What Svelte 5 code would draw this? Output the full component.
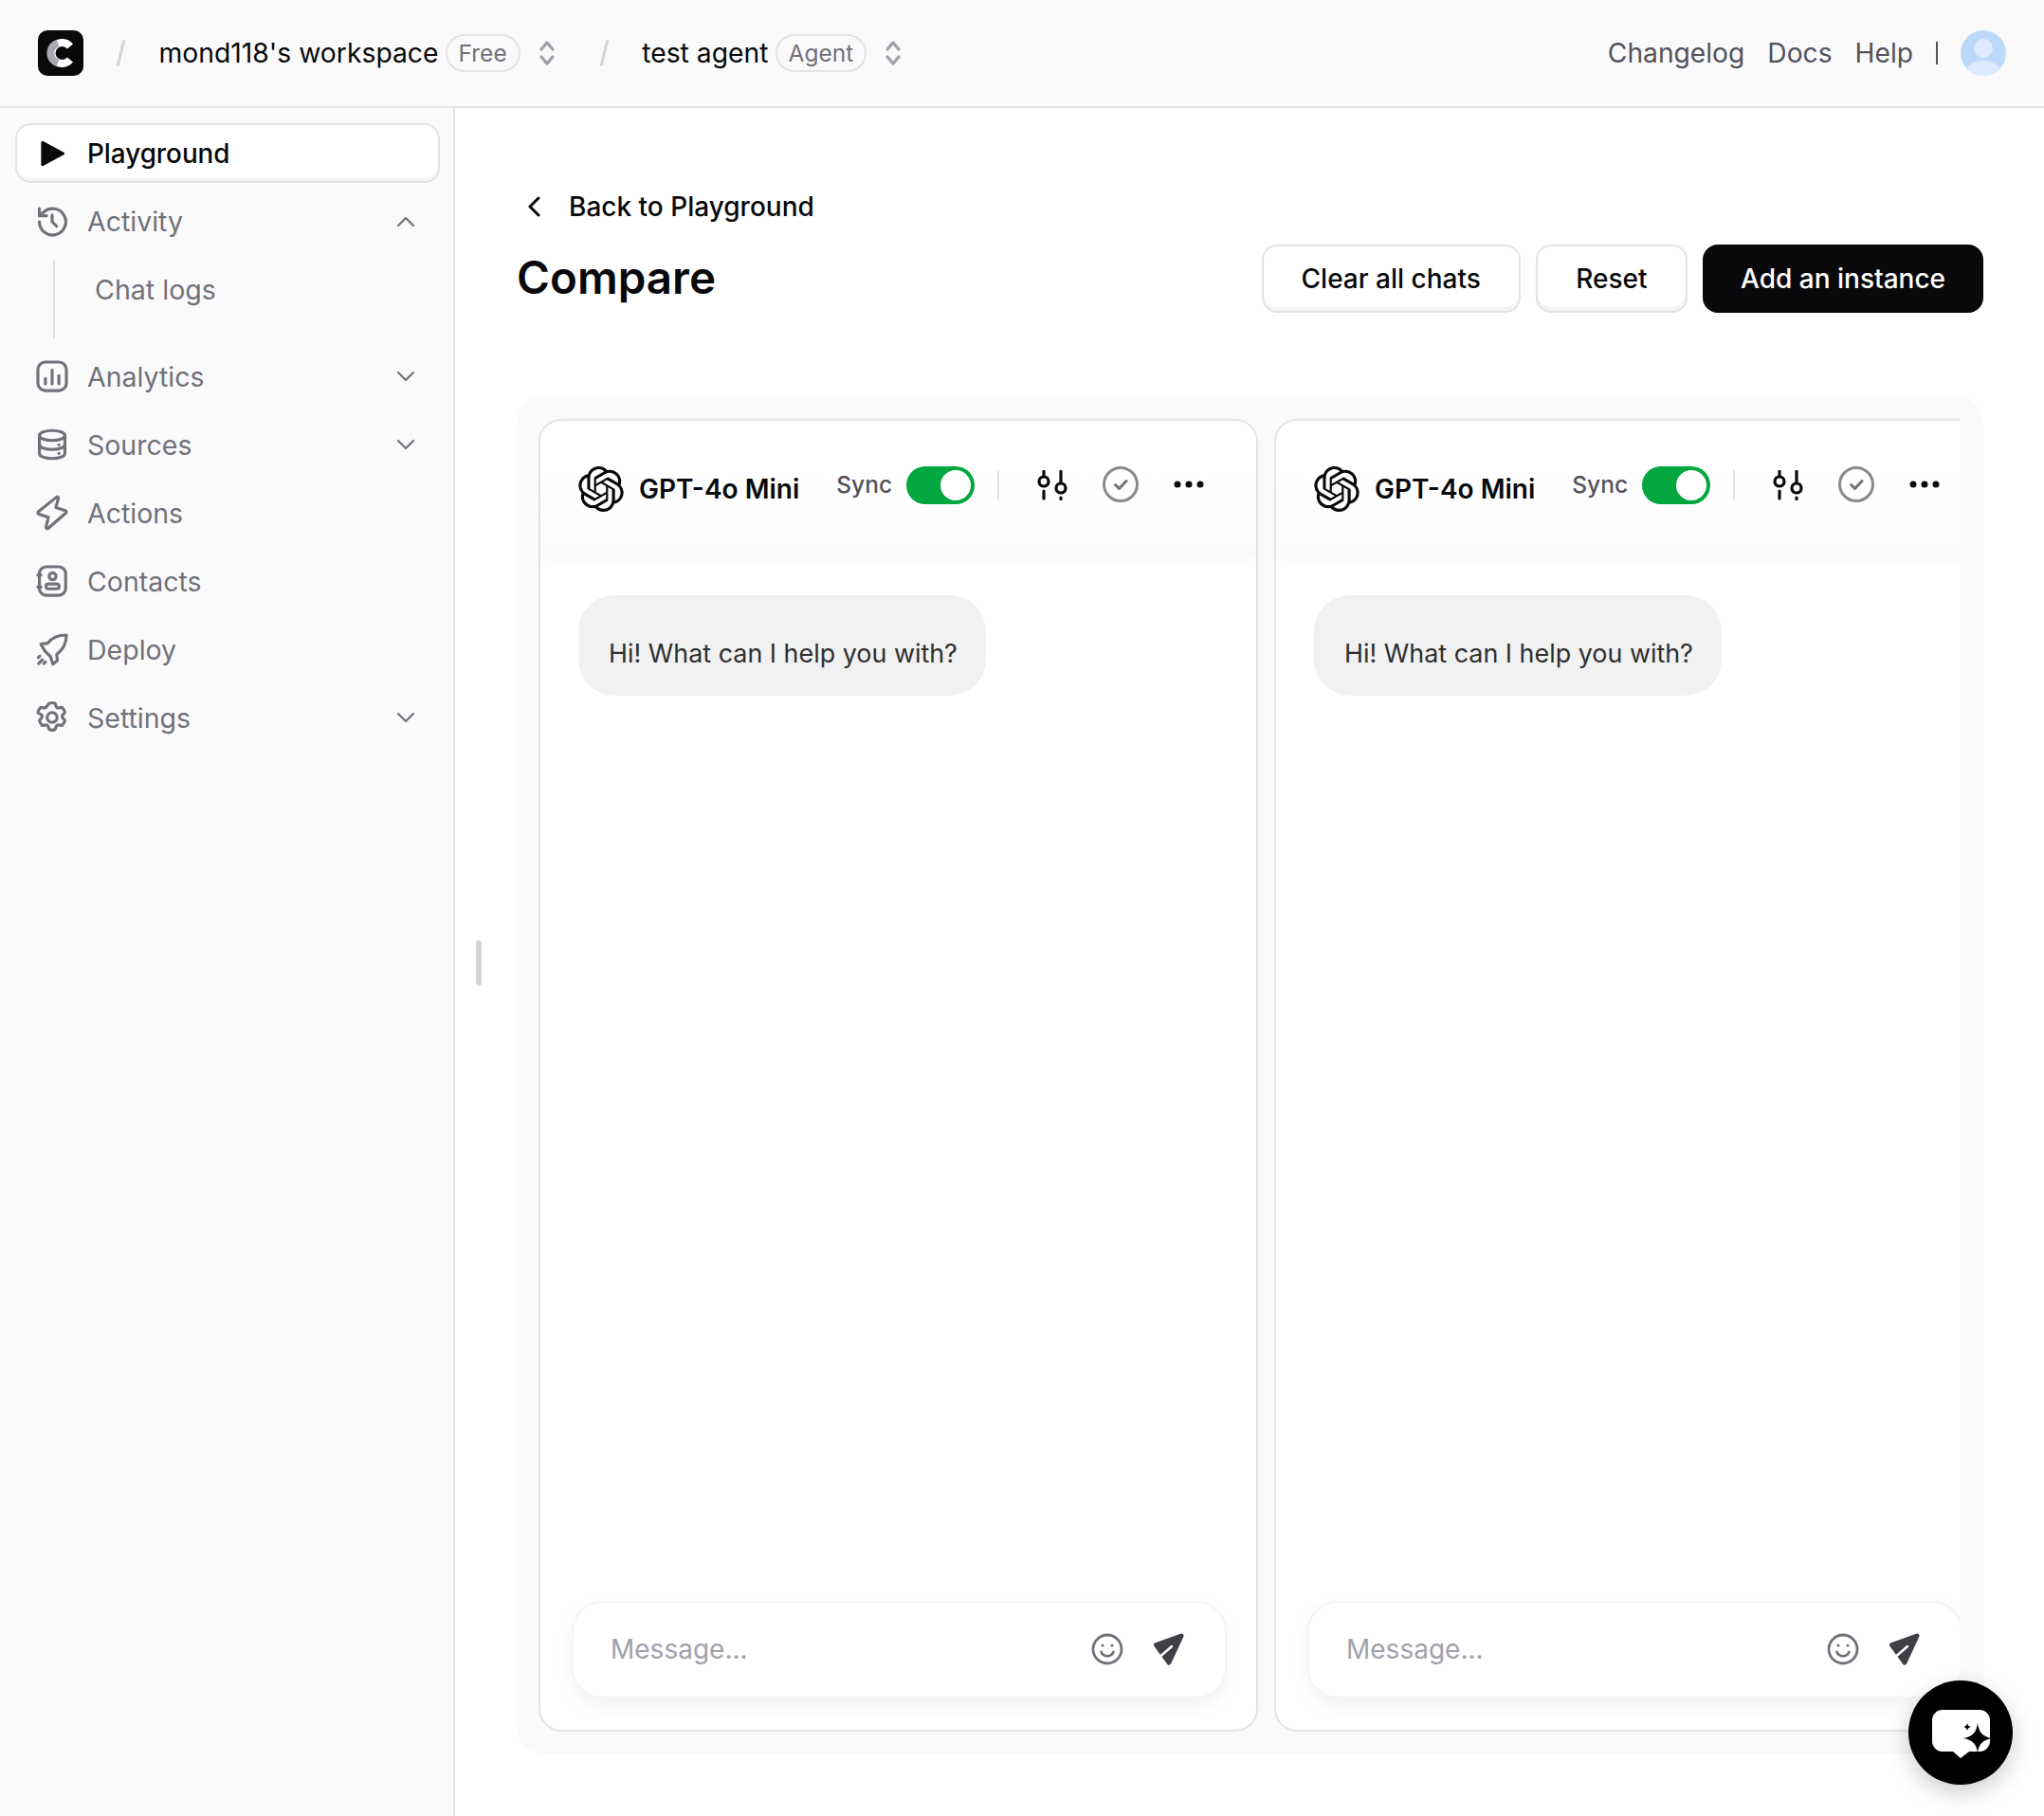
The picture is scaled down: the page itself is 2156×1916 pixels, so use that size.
<script>
  const nav = [
    { label: 'Activity', open: true, paths: ['M3.5 12a8.8 8.8 0 1 0 2.8-6.4L3.5 8', 'M3.5 3.2V8h4.8', 'M12 7.5V12l3 3'] },
    { label: 'Analytics', chevron: true, paths: ['M7.5 2.5h9a5 5 0 0 1 5 5v9a5 5 0 0 1-5 5h-9a5 5 0 0 1-5-5v-9a5 5 0 0 1 5-5z', 'M7.5 13.5v3.5', 'M12 8v9', 'M16.5 11.5V17'] },
    { label: 'Sources', chevron: true, paths: ['M3.5 6c0-1.9 3.8-3.3 8.5-3.3s8.500 1.400 8.500 3.300v12c0 1.900-3.800 3.300-8.500 3.300S3.500 19.900 3.500 18z', 'M3.500 6c0 1.900 3.800 3.300 8.500 3.300s8.500-1.400 8.500-3.300', 'M3.500 12c0 1.900 3.800 3.300 8.500 3.300s8.500-1.400 8.500-3.300', 'M16.500 12.200v.1', 'M16.500 17.900v.1'] },
    { label: 'Actions', paths: ['M15 1.500c.8-.4 1.300.2 1.100 1L14.500 8.500l6.300 2.100c.8.300.9 1.100.3 1.600L9.500 22.300c-.7.600-1.700.100-1.500-.9l1.500-6.400-6.200-2.100c-.8-.3-1-1.100-.4-1.700z'] },
    { label: 'Contacts', paths: ['M8 2.500h8.500a4.500 4.500 0 0 1 4.500 4.500v10a4.500 4.500 0 0 1-4.500 4.500H8A4.500 4.500 0 0 1 3.500 17V7A4.500 4.500 0 0 1 8 2.500z', 'M12.300 6.500a2.300 2.300 0 1 1 0 4.600 2.300 2.300 0 0 1 0-4.600z', 'M9.500 14h5.600a1.600 1.600 0 0 1 0 3.200H9.500a1.600 1.600 0 0 1 0-3.200z', 'M2.500 8h2', 'M2.500 16h2'] },
    { label: 'Deploy', paths: ['M21.500 2.500c-5.500 0-9.500 1.500-12.500 5.500l-4.500.5L7 13l4 4 1.500 5 3-2.500-.5-4c4-3 6.500-7 6.500-13z', 'M3 21.500l2.500-2.500', 'M2.800 17.500l1-1', 'M6.500 21.500l1-1'] },
    { label: 'Settings', chevron: true, paths: ['M10 2.700c1.200-.6 2.800-.6 4 0l.6 1.800c.3.800 1.200 1.300 2 1.100l1.900-.4c.9.900 1.700 2.200 2 3.500l-1.300 1.400c-.6.700-.6 1.700 0 2.400l1.300 1.400c-.3 1.300-1.100 2.600-2 3.500l-1.900-.4c-.8-.2-1.700.3-2 1.100l-.6 1.800c-1.200.6-2.800.6-4 0l-.6-1.800c-.3-.8-1.200-1.300-2-1.100l-1.900.4c-.9-.9-1.700-2.200-2-3.500l1.300-1.400c.6-.7.6-1.700 0-2.400L2.500 8.700c.3-1.300 1.100-2.600 2-3.500l1.900.4c.8.2 1.700-.3 2-1.100z', 'M12 8.700a3.300 3.300 0 1 1 0 6.600 3.300 3.300 0 0 1 0-6.600z'] }
  ];

  const openai = 'M22.2819 9.8211a5.9847 5.9847 0 0 0-.5157-4.9108 6.0462 6.0462 0 0 0-6.5098-2.9A6.0651 6.0651 0 0 0 4.9807 4.1818a5.9847 5.9847 0 0 0-3.9977 2.9 6.0462 6.0462 0 0 0 .7427 7.0966 5.98 5.98 0 0 0 .511 4.9107 6.051 6.051 0 0 0 6.5146 2.9001A5.9847 5.9847 0 0 0 13.2599 24a6.0557 6.0557 0 0 0 5.7718-4.2058 5.9894 5.9894 0 0 0 3.9977-2.9001 6.0557 6.0557 0 0 0-.7475-7.0729zm-9.022 12.6081a4.4755 4.4755 0 0 1-2.8764-1.0408l.1419-.0804 4.7783-2.7582a.7948.7948 0 0 0 .3927-.6813v-6.7369l2.02 1.1686a.071.071 0 0 1 .038.052v5.5826a4.504 4.504 0 0 1-4.4945 4.4944zm-9.6607-4.1254a4.4708 4.4708 0 0 1-.5346-3.0137l.142.0852 4.783 2.7582a.7712.7712 0 0 0 .7806 0l5.8428-3.3685v2.3324a.0804.0804 0 0 1-.0332.0615L9.74 19.9502a4.4992 4.4992 0 0 1-6.1408-1.6464zM2.3408 7.8956a4.485 4.485 0 0 1 2.3655-1.9728V11.6a.7664.7664 0 0 0 .3879.6765l5.8144 3.3543-2.0201 1.1685a.0757.0757 0 0 1-.071 0l-4.8303-2.7865A4.504 4.504 0 0 1 2.3408 7.872zm16.5963 3.8558L13.1038 8.364 15.1192 7.2a.0757.0757 0 0 1 .071 0l4.8303 2.7913a4.4944 4.4944 0 0 1-.6765 8.1042v-5.6772a.79.79 0 0 0-.407-.667zm2.0107-3.0231l-.142-.0852-4.7735-2.7818a.7759.7759 0 0 0-.7854 0L9.409 9.2297V6.8974a.0662.0662 0 0 1 .0284-.0615l4.8303-2.7866a4.4992 4.4992 0 0 1 6.6802 4.66zM8.3065 12.863l-2.02-1.1638a.0804.0804 0 0 1-.038-.0567V6.0742a4.4992 4.4992 0 0 1 7.3757-3.4537l-.142.0805L8.704 5.459a.7948.7948 0 0 0-.3927.6813zm1.0976-2.3654l2.602-1.4998 2.6069 1.4998v2.9994l-2.5974 1.4997-2.6067-1.4997Z';

  const chats = [1, 2];
</script>

{#snippet updown()}
  <svg class="updown" viewBox="0 0 20 28" fill="none" stroke="#a1a1aa" stroke-width="3.400" stroke-linecap="round" stroke-linejoin="round">
    <path d="M4 10l6-7 6 7" />
    <path d="M4 18l6 7 6-7" />
  </svg>
{/snippet}

<div class="app">
  <header class="topbar">
    <svg class="logo" viewBox="0 0 48 48">
      <rect width="48" height="48" rx="10" fill="#09090b" />
      <path d="M34 17a11 11 0 1 0 0 14" fill="none" stroke="#fff" stroke-width="8" />
      <path d="M21 13.500a11 11 0 0 0 0 21" fill="none" stroke="#a8a8b0" stroke-width="8" />
    </svg>
    <span class="slash"></span>
    <span class="crumb first">mond118's workspace</span>
    <span class="badge">Free</span>
    {@render updown()}
    <span class="slash second"></span>
    <span class="crumb">test agent</span>
    <span class="badge">Agent</span>
    {@render updown()}

    <nav class="toplinks">
      <span>Changelog</span>
      <span>Docs</span>
      <span>Help</span>
      <span class="bar"></span>
      <svg class="avatar" viewBox="0 0 48 48">
        <defs>
          <clipPath id="avatar-clip"><circle cx="24" cy="24" r="24" /></clipPath>
        </defs>
        <g clip-path="url(#avatar-clip)">
          <rect width="48" height="48" fill="#bcd9fb" />
          <circle cx="24" cy="19" r="10" fill="#dbeafc" />
          <ellipse cx="24" cy="44" rx="18" ry="12" fill="#dbeafc" />
        </g>
      </svg>
    </nav>
  </header>

  <div class="layout">
    <aside class="sidebar">
      <button class="nav-item active">
        <svg class="nav-icon play" viewBox="0 0 24 24" fill="#09090b" stroke="#09090b" stroke-width="2" stroke-linejoin="round">
          <path d="M5 4l15 8-15 8z" />
        </svg>
        <span>Playground</span>
      </button>

      {#each nav as item}
        <button class="nav-item">
          <svg class="nav-icon" viewBox="0 0 24 24" fill="none" stroke="#71717a" stroke-width="2" stroke-linecap="round" stroke-linejoin="round">
            {#each item.paths as d}<path {d} />{/each}
          </svg>
          <span>{item.label}</span>
          {#if item.open}
            <svg class="chevron" viewBox="0 0 20 12" fill="none" stroke="#71717a" stroke-width="2.200" stroke-linecap="round" stroke-linejoin="round"><path d="M2 10l8-8 8 8" /></svg>
          {:else if item.chevron}
            <svg class="chevron" viewBox="0 0 20 12" fill="none" stroke="#71717a" stroke-width="2.200" stroke-linecap="round" stroke-linejoin="round"><path d="M2 2l8 8 8-8" /></svg>
          {/if}
        </button>
        {#if item.open}
          <div class="subnav"><span>Chat logs</span></div>
        {/if}
      {/each}
    </aside>

    <main class="content">
      <span class="handle"></span>

      <div class="back">
        <svg viewBox="0 0 14 22" fill="none" stroke="#09090b" stroke-width="3" stroke-linecap="round" stroke-linejoin="round"><path d="M11 2l-9 9 9 9" /></svg>
        <span>Back to Playground</span>
      </div>

      <div class="title-row">
        <h1>Compare</h1>
        <div class="actions">
          <button class="btn">Clear all chats</button>
          <button class="btn">Reset</button>
          <button class="btn dark">Add an instance</button>
        </div>
      </div>

      <section class="board">
        <div class="board-inner">
          {#each chats as chat (chat)}
            <article class="card">
              <div class="card-head">
                <svg class="model-logo" viewBox="0 0 24 24" fill="#09090b"><path d={openai} /></svg>
                <span class="model">GPT-4o Mini</span>
                <span class="sync">Sync</span>
                <span class="toggle"><span class="knob"></span></span>
                <span class="divider"></span>
                <svg class="tool sliders" viewBox="0 0 32 32" fill="none" stroke="#09090b" stroke-width="3.200" stroke-linecap="round">
                  <path d="M7 1.500v4" />
                  <circle cx="7" cy="12" r="5" />
                  <path d="M7 22v8" />
                  <path d="M25 1.500V13" />
                  <circle cx="25" cy="19" r="5" />
                  <path d="M25 29v1.500" />
                </svg>
                <svg class="tool check" viewBox="0 0 38 38" fill="none" stroke="#8a8a8a" stroke-width="3" stroke-linecap="round" stroke-linejoin="round">
                  <circle cx="19" cy="19" r="17.500" />
                  <path d="M13.500 19.500l4 4 7.500-8" stroke="#737373" />
                </svg>
                <svg class="tool dots" viewBox="0 0 32 8" fill="#09090b">
                  <circle cx="4" cy="4" r="3.500" />
                  <circle cx="16" cy="4" r="3.500" />
                  <circle cx="28" cy="4" r="3.500" />
                </svg>
              </div>

              <div class="card-body">
                <div class="bubble">Hi! What can I help you with?</div>
              </div>

              <div class="composer">
                <span class="placeholder">Message...</span>
                <svg class="smile" viewBox="0 0 34 34" fill="none" stroke="#71717a" stroke-width="2.800" stroke-linecap="round">
                  <circle cx="17" cy="17" r="15" />
                  <path d="M10.500 20c1.400 3 3.600 4.300 6.500 4.300s5.100-1.300 6.500-4.300" />
                  <circle cx="12" cy="13" r="1.600" fill="#71717a" stroke="none" />
                  <circle cx="22" cy="13" r="1.600" fill="#71717a" stroke="none" />
                </svg>
                <svg class="send" viewBox="0 0 36 36" fill="#3f3f46" stroke-linejoin="round" stroke-linecap="round">
                  <path d="M31 4L4.500 13.500 18 32z" stroke="#3f3f46" stroke-width="5" />
                  <path d="M21 15L9 25.500" stroke="#fff" stroke-width="2.400" fill="none" />
                </svg>
              </div>
            </article>
          {/each}
        </div>
      </section>
    </main>
  </div>

  <button class="fab" aria-label="Open chat">
    <svg viewBox="0 0 110 110">
      <path d="M36 31h39a11 11 0 0 1 11 11v22a11 11 0 0 1-11 11H64l-9 7-8-7H36a11 11 0 0 1-11-11V42a11 11 0 0 1 11-11z" fill="#fff" />
      <path d="M73 45c1.500 10 5 14 15 16-10 2-13.500 6-15 15-1.500-9-5-13-15-15 10-2 13.500-6 15-16z" fill="#000" />
      <path d="M62 45c.5 2.500 1.500 3.500 4 4-2.500.5-3.500 1.500-4 4-.5-2.500-1.500-3.500-4-4 2.500-.5 3.500-1.500 4-4z" fill="#000" />
    </svg>
  </button>
</div>

<style>
  :global(body) {
    margin: 0;
    background: #fff;
    font-family: Inter, "Liberation Sans", sans-serif;
    color: #09090b;
  }

  button {
    font-family: inherit;
  }

  .app {
    height: 100vh;
    display: flex;
    flex-direction: column;
    overflow: hidden;
  }

  /* Top bar */
  .topbar {
    height: 112px;
    flex: none;
    display: flex;
    align-items: center;
    padding: 0 40px;
    background: #fafafa;
    border-bottom: 2px solid #e4e4e7;
    font-size: 28.200px;
  }

  .logo {
    width: 48px;
    height: 48px;
  }

  .slash {
    width: 2.500px;
    height: 28px;
    margin-left: 38px;
    background: #d4d4d8;
    transform: rotate(14deg);
  }

  .slash.second {
    margin-left: 49px;
  }

  .crumb {
    margin-left: 39px;
    margin-right: 7px;
    white-space: nowrap;
    font-size: 28.300px;
  }

  .badge {
    height: 36px;
    padding: 0 12px;
    display: flex;
    align-items: center;
    border: 2px solid #e4e4e7;
    border-radius: 20px;
    font-size: 24.500px;
    color: #71717a;
  }

  .updown {
    width: 20px;
    height: 28px;
    margin-left: 18px;
  }

  .toplinks {
    margin-left: auto;
    display: flex;
    align-items: center;
    gap: 24px;
    color: #52525b;
  }

  .bar {
    width: 2px;
    height: 24px;
    background: #52525b;
  }

  .avatar {
    width: 48px;
    height: 48px;
  }

  .layout {
    flex: 1;
    min-height: 0;
    display: flex;
  }

  /* Sidebar */
  .sidebar {
    width: 480px;
    flex: none;
    box-sizing: border-box;
    padding: 16px 14px 16px 16px;
    display: flex;
    flex-direction: column;
    gap: 9px;
    background: #fafafa;
    border-right: 2px solid #e4e4e7;
  }

  .nav-item {
    height: 63px;
    display: flex;
    align-items: center;
    gap: 18px;
    padding: 0 18px;
    border: 2px solid transparent;
    border-radius: 16px;
    background: none;
    font-size: 28.500px;
    color: #71717a;
    text-align: left;
  }

  .nav-item.active {
    background: #fff;
    color: #09090b;
    font-size: 27.800px;
    font-weight: 500;
    border-color: #e4e4e7;
    box-shadow: inset 0 -3px 0 #f4f4f5;
  }

  .nav-icon {
    width: 38px;
    height: 38px;
    flex: none;
  }

  .play {
    transform: scale(0.92);
  }

  .chevron {
    width: 20px;
    height: 12px;
    margin-left: auto;
    margin-right: 6px;
  }

  .subnav {
    height: 82.500px;
    margin-left: 40px;
    padding-left: 42px;
    box-sizing: border-box;
    border-left: 2px solid #e4e4e7;
    font-size: 28.600px;
    color: #71717a;
    line-height: 64px;
  }

  /* Main column */
  .content {
    position: relative;
    flex: 1;
    min-width: 0;
    display: flex;
    flex-direction: column;
    padding: 84px 64px 66px 65px;
    box-sizing: border-box;
  }

  .handle {
    position: absolute;
    left: 22px;
    top: 878px;
    width: 6px;
    height: 48px;
    background: #d4d4d8;
    border-radius: 3px;
  }

  .back {
    height: 40px;
    display: flex;
    align-items: center;
    gap: 29px;
    padding-left: 12px;
    font-size: 28px;
    font-weight: 500;
  }

  .back svg {
    width: 14px;
    height: 22px;
  }

  .title-row {
    margin-top: 20px;
    display: flex;
    align-items: center;
    justify-content: space-between;
  }

  h1 {
    margin: 0 0 3px;
    font-size: 47.500px;
    font-weight: 600;
  }

  .actions {
    display: flex;
    gap: 16.500px;
  }

  .btn {
    height: 72px;
    padding: 0 40px;
    border: 2px solid #e4e4e7;
    border-radius: 16px;
    background: #fff;
    box-shadow: inset 0 -4px 0 #f4f4f5;
    font-size: 28px;
    font-weight: 500;
    color: #09090b;
  }

  .btn.dark {
    padding: 0 38px;
    background: #09090b;
    border-color: #09090b;
    box-shadow: none;
    color: #fff;
  }

  /* Compare board */
  .board {
    flex: 1;
    min-height: 0;
    margin-top: 88px;
    padding: 24px 24px 23px 23px;
    background: #fafafa;
    border-radius: 28px;
    display: flex;
  }

  .board-inner {
    flex: 1;
    min-width: 0;
    display: flex;
    gap: 17px;
    overflow: hidden;
  }

  .card {
    position: relative;
    width: 759px;
    flex: none;
    box-sizing: border-box;
    display: flex;
    flex-direction: column;
    background: #fff;
    border: 2px solid #e4e4e7;
    border-radius: 24px;
    overflow: hidden;
  }

  .card-head {
    height: 144px;
    flex: none;
    box-sizing: border-box;
    display: flex;
    align-items: flex-start;
    padding: 48px 40px 0;
    background: linear-gradient(#fff 40%, #fafafa);
    box-shadow: 0 3px 7px rgba(0, 0, 0, 0.025);
  }

  .model-logo {
    width: 48px;
    height: 48px;
    flex: none;
  }

  .model {
    margin-left: 16px;
    margin-top: 7px;
    font-size: 28px;
    font-weight: 600;
    white-space: nowrap;
  }

  .sync {
    margin-left: 39px;
    margin-top: 4px;
    font-size: 24.500px;
    font-weight: 500;
    color: #52525b;
  }

  .toggle {
    width: 72px;
    height: 40px;
    margin-left: 15px;
    flex: none;
    box-sizing: border-box;
    padding: 4px 4px 4px 36px;
    background: #03a73f;
    border-radius: 20px;
  }

  .knob {
    display: block;
    width: 32px;
    height: 32px;
    background: #fff;
    border-radius: 50%;
  }

  .divider {
    width: 2px;
    height: 32px;
    margin-left: 24px;
    margin-top: 4px;
    background: #e4e4e7;
  }

  .tool {
    flex: none;
  }

  .sliders {
    width: 32px;
    height: 32px;
    margin-left: 40px;
    margin-top: 4px;
  }

  .check {
    width: 38px;
    height: 38px;
    margin-left: 37px;
  }

  .dots {
    width: 32px;
    height: 8px;
    margin-left: 37px;
    margin-top: 15px;
  }

  .card-body {
    flex: 1;
    min-height: 0;
    padding: 40px 40px 0;
  }

  .bubble {
    width: fit-content;
    padding: 44px 30px 0 32px;
    height: 106px;
    box-sizing: border-box;
    background: #f1f1f1;
    border-radius: 38px;
    font-size: 26.900px;
    line-height: 34px;
    color: #2f2f2f;
  }

  .composer {
    height: 103px;
    flex: none;
    box-sizing: border-box;
    margin: 0 31px 33px 33px;
    padding: 0 41px 2px 39px;
    display: flex;
    align-items: center;
    background: #fff;
    border: 2px solid #f4f4f5;
    border-radius: 32px;
    box-shadow: 0 8px 20px rgba(0, 0, 0, 0.05);
  }

  .placeholder {
    font-size: 28px;
    color: #a1a1aa;
  }

  .smile {
    width: 34px;
    height: 34px;
    margin-left: auto;
    margin-right: 30px;
  }

  .send {
    width: 36px;
    height: 36px;
  }

  .fab {
    position: fixed;
    right: 33px;
    bottom: 33px;
    width: 110px;
    height: 110px;
    padding: 0;
    border: none;
    border-radius: 50%;
    background: #000;
    box-shadow: 0 8px 24px rgba(0, 0, 0, 0.2);
  }

  .fab svg {
    display: block;
    width: 110px;
    height: 110px;
  }
</style>
